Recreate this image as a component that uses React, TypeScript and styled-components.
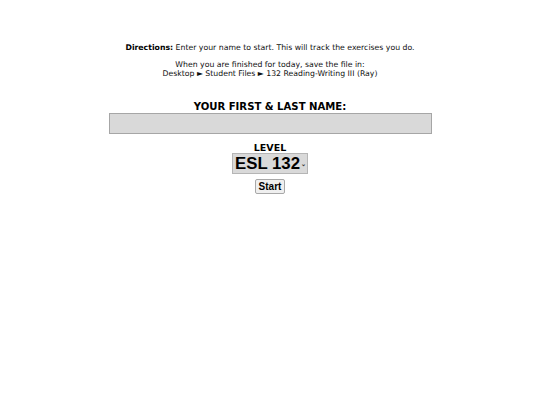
import styled, { createGlobalStyle } from "styled-components";

const GlobalStyle = createGlobalStyle`
  html, body {
    margin: 0;
    padding: 0;
    background: #ffffff;
  }
  body {
    font-family: Verdana, "DejaVu Sans", sans-serif;
    color: #000;
  }
`;

const Page = styled.main`
  display: flex;
  flex-direction: column;
  align-items: center;
  padding-top: 43px;
`;

const Note = styled.p`
  margin: 0;
  font-size: 7.75px;
  line-height: 9px;
  text-align: center;
  color: #111;

  & + & {
    margin-top: 8px;
  }

  b {
    font-weight: bold;
    color: #000;
  }
`;

const Form = styled.form`
  display: flex;
  flex-direction: column;
  align-items: center;
  margin-top: 22px;
`;

const Label = styled.label`
  font-size: 10.1px;
  font-weight: bold;
  line-height: 13px;
`;

const NameInput = styled.input`
  box-sizing: border-box;
  width: 323px;
  height: 21px;
  margin: 0;
  background: #d9d9d9;
  border: 1px solid #a6a6a6;
  font-family: "Liberation Sans", Arial, sans-serif;
  font-size: 12px;
`;

const LevelGroup = styled.div`
  display: flex;
  flex-direction: column;
  align-items: center;
  margin-top: 8px;
`;

const LevelLabel = styled.label`
  font-size: 9.5px;
  font-weight: bold;
  line-height: 11px;
`;

const SelectBox = styled.div`
  position: relative;
  display: flex;
  align-items: center;
  box-sizing: border-box;
  height: 21px;
  padding: 0 7px 0 2px;
  background: #d9d9d9;
  border: 1px solid #b5b5b5;
  font-family: "Liberation Sans", Arial, sans-serif;
  font-size: 16.8px;
  font-weight: bold;
  line-height: 21px;
`;

const Caret = styled.span`
  position: absolute;
  right: 1px;
  top: 7px;
  font-size: 6px;
  line-height: 6px;
  font-weight: bold;
  color: #333;
`;

const StartButton = styled.button`
  box-sizing: border-box;
  margin-top: 5px;
  height: 15px;
  padding: 0 3px;
  background: #efefef;
  border: 1px solid #a8a8a8;
  border-radius: 2px;
  font-family: "Liberation Sans", Arial, sans-serif;
  font-size: 10px;
  font-weight: bold;
  line-height: 13px;
  color: #000;
`;

export default function App() {
  return (
    <>
      <GlobalStyle />
      <Page>
        <Note>
          <b>Directions:</b> Enter your name to start. This will track the exercises you do.
        </Note>
        <Note>
          When you are finished for today, save the file in:
          <br />
          Desktop ► Student Files ► 132 Reading-Writing III (Ray)
        </Note>
        <Form onSubmit={(e) => e.preventDefault()}>
          <Label htmlFor="name">YOUR FIRST &amp; LAST NAME:</Label>
          <NameInput id="name" type="text" />
          <LevelGroup>
            <LevelLabel>LEVEL</LevelLabel>
            <SelectBox>
              ESL 132
              <Caret>⌄</Caret>
            </SelectBox>
            <StartButton type="submit">Start</StartButton>
          </LevelGroup>
        </Form>
      </Page>
    </>
  );
}
